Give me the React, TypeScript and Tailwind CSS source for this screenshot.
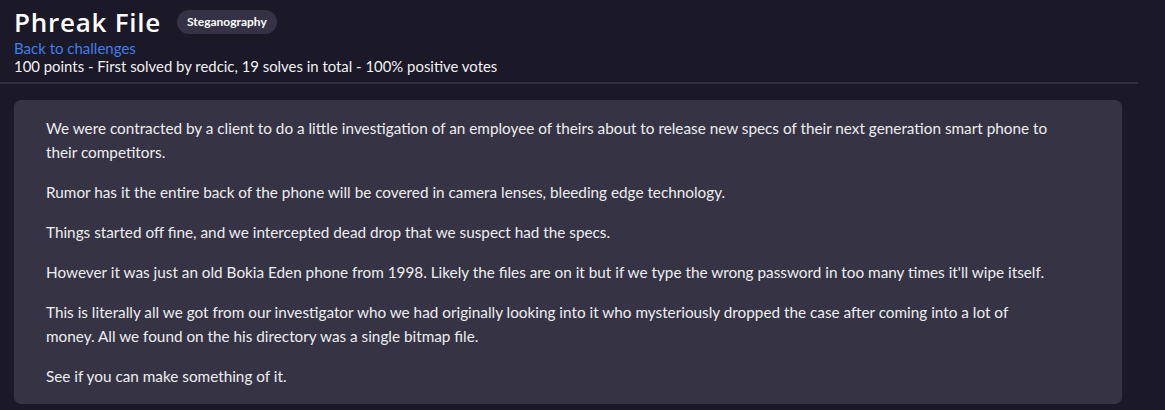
export default function App() {
  const paras: React.ReactNode[] = [
    "We were contracted by a client to do a little investigation of an employee of theirs about to release new specs of their next generation smart phone to their competitors.",
    "Rumor has it the entire back of the phone will be covered in camera lenses, bleeding edge technology.",
    "Things started off fine, and we intercepted dead drop that we suspect had the specs.",
    "However it was just an old Bokia Eden phone from 1998. Likely the files are on it but if we type the wrong password in too many times it'll wipe itself.",
    <>
      This is literally all we got from our investigator who we had originally looking into it who mysteriously dropped the case after coming into a lot of
      <br />
      money. All we found on the his directory was a single bitmap file.
    </>,
    "See if you can make something of it.",
  ];
  return (
    <div
      className="w-[1165px] h-[410px] bg-[#1b1828] text-[#f2f2f2] overflow-hidden"
      style={{ fontFamily: "Lato, 'Open Sans', sans-serif" }}
    >
      <div className="pr-[27px]">
        <div className="pl-[14px] pt-[6px]">
          <div className="flex items-center gap-[16px] h-[32px]">
            <h1
              className="text-[26px] font-semibold leading-[32px] text-white tracking-[0.75px]"
              style={{ fontFamily: "'Open Sans', Lato, sans-serif" }}
            >
              Phreak File
            </h1>
            <span className="rounded-full bg-[#353246] px-[10px] h-[24px] flex items-center text-[12px] font-bold text-white">
              Steganography
            </span>
          </div>
          <a className="block text-[15px] leading-[18px] text-[#3f7ee8] mt-[1px]">
            Back to challenges
          </a>
          <div className="text-[14.9px] leading-[19px] text-[#f2f2f2]">
            100 points - First solved by redcic, 19 solves in total - 100% positive votes
          </div>
        </div>
        <div className="mt-[6px] h-[2px] bg-[#302d3e]" />
      </div>
      <div className="mx-[14px] mr-[43px] mt-[16px] rounded-[7px] bg-[#363444] pl-[32px] pr-[46px] pt-[16px] pb-[12px]">
        {paras.map((p, i) => (
          <p key={i} className="text-[15.3px] leading-[24px] text-[#ededf0] mb-[16px] last:mb-[4px]">
            {p}
          </p>
        ))}
      </div>
    </div>
  );
}
